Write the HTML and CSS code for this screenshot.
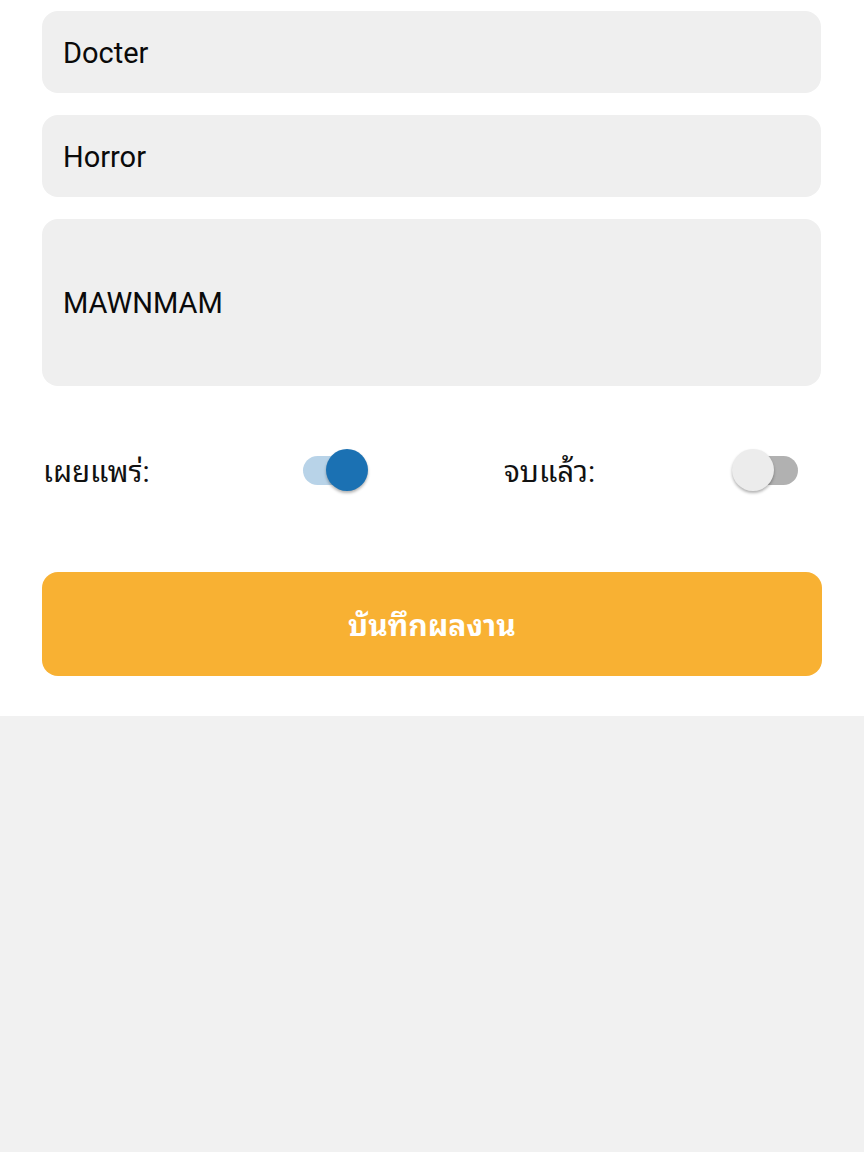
FILE: index.html
```html
<!DOCTYPE html>
<html lang="th">
<head>
<meta charset="utf-8">
<link rel="stylesheet" href="styles.css">
</head>
<body>
<div class="sheet">
  <div class="field">Docter</div>
  <div class="field">Horror</div>
  <div class="field field-tall">MAWNMAM</div>
  <div class="toggles">
    <div class="group group-1">
      <span class="label">เผยแพร่:</span>
      <span class="switch on"><span class="thumb"></span></span>
    </div>
    <div class="group group-2">
      <span class="label">จบแล้ว:</span>
      <span class="switch off"><span class="thumb"></span></span>
    </div>
  </div>
  <button class="save">บันทึกผลงาน</button>
</div>
</body>
</html>
```
FILE: styles.css
```css
html, body {
  margin: 0;
  padding: 0;
}
body {
  background: #f1f1f1;
  font-family: Roboto, "Noto Sans Thai Looped", "Noto Sans Thai", "Noto Sans", sans-serif;
  color: #000;
}
.sheet {
  background: #fff;
  height: 716px;
  box-sizing: border-box;
  padding: 11px 42px 0 42px;
  display: flex;
  flex-direction: column;
}
.field {
  background: #efefef;
  border-radius: 16px;
  height: 82px;
  display: flex;
  align-items: center;
  padding-left: 21px;
  padding-top: 1px;
  font-size: 29px;
  margin-bottom: 22px;
  width: 779px;
  box-sizing: border-box;
  color: #0a0a0a;
}
.field-tall {
  height: 167px;
  margin-bottom: 0;
}
.toggles {
  display: flex;
  align-items: center;
  height: 64px;
  margin-top: 52px;
}
.group {
  display: flex;
  align-items: center;
}
.group-1 { width: 320px; }
.group-2 { margin-left: 141px; }
.label {
  font-size: 29.5px;
  color: #111;
  padding-left: 1px;
  margin-top: -4px;
}
.group-1 .label { width: 260px; }
.group-2 .label { width: 235px; }
.switch {
  position: relative;
  width: 59px;
  height: 29px;
  border-radius: 15px;
}
.switch.on { background: #b8d3e8; }
.switch.off { background: #b1b1b1; }
.thumb {
  position: absolute;
  top: -7px;
  width: 42px;
  height: 42px;
  border-radius: 50%;
  box-shadow: 0 2px 3px rgba(0,0,0,0.3);
}
.switch.on .thumb {
  background: #1b71b3;
  left: 23px;
}
.switch.off .thumb {
  background: #ececec;
  left: -7px;
}
.save {
  margin-top: 70px;
  height: 104px;
  width: 780px;
  border: none;
  border-radius: 16px;
  background: #f8b133;
  color: #fff;
  font-family: Roboto, "Noto Sans Thai Looped", "Noto Sans Thai", "Noto Sans", sans-serif;
  font-size: 30px;
  font-weight: bold;
  padding-bottom: 4px;
}
```
